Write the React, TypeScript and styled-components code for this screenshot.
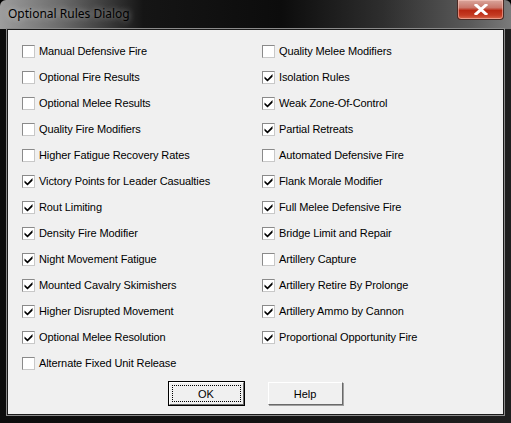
import styled, { createGlobalStyle } from 'styled-components'

const GlobalStyle = createGlobalStyle`
  html, body { margin: 0; padding: 0; background: #000; }
  body { width: 511px; height: 423px; overflow: hidden; }
`

const left = [
  { label: 'Manual Defensive Fire', checked: false },
  { label: 'Optional Fire Results', checked: false },
  { label: 'Optional Melee Results', checked: false },
  { label: 'Quality Fire Modifiers', checked: false },
  { label: 'Higher Fatigue Recovery Rates', checked: false },
  { label: 'Victory Points for Leader Casualties', checked: true },
  { label: 'Rout Limiting', checked: true },
  { label: 'Density Fire Modifier', checked: true },
  { label: 'Night Movement Fatigue', checked: true },
  { label: 'Mounted Cavalry Skimishers', checked: true },
  { label: 'Higher Disrupted Movement', checked: true },
  { label: 'Optional Melee Resolution', checked: true },
  { label: 'Alternate Fixed Unit Release', checked: false },
]

const right = [
  { label: 'Quality Melee Modifiers', checked: false },
  { label: 'Isolation Rules', checked: true },
  { label: 'Weak Zone-Of-Control', checked: true },
  { label: 'Partial Retreats', checked: true },
  { label: 'Automated Defensive Fire', checked: false },
  { label: 'Flank Morale Modifier', checked: true },
  { label: 'Full Melee Defensive Fire', checked: true },
  { label: 'Bridge Limit and Repair', checked: true },
  { label: 'Artillery Capture', checked: false },
  { label: 'Artillery Retire By Prolonge', checked: true },
  { label: 'Artillery Ammo by Cannon', checked: true },
  { label: 'Proportional Opportunity Fire', checked: true },
]

const CheckRow = ({ label, checked }: { label: string; checked: boolean }) => (
  <Row>
    <Box>
      {checked && (
        <svg width="9" height="9" viewBox="0 0 9 9">
          <path d="M0.5 3.5 L3.5 6.2 L8.5 1 L8.5 3.8 L3.5 8.6 L0.5 5.8 Z" fill="#000" />
        </svg>
      )}
    </Box>
    <Label>{label}</Label>
  </Row>
)

const App = () => {
  return (
    <Window>
      <GlobalStyle />
      <TitleBar>
        <Title>Optional Rules Dialog</Title>
        <CloseButton>
          <svg width="14" height="11" viewBox="0 0 14 11">
            <path d="M2 1 L12 10 M12 1 L2 10" stroke="#fff" strokeWidth="3" strokeLinecap="square" />
          </svg>
        </CloseButton>
      </TitleBar>
      <Frame>
        <Client>
          <Columns>
            <Column>
              {left.map((o) => (
                <CheckRow key={o.label} {...o} />
              ))}
            </Column>
            <Column>
              {right.map((o) => (
                <CheckRow key={o.label} {...o} />
              ))}
            </Column>
          </Columns>
          <Buttons>
            <Button $default>
              <Focus>OK</Focus>
            </Button>
            <Button>Help</Button>
          </Buttons>
        </Client>
      </Frame>
    </Window>
  )
}

export default App

const Window = styled.div`
  width: 511px;
  height: 423px;
  display: flex;
  flex-direction: column;
  box-sizing: border-box;
  border-radius: 6px 6px 0 0;
  background: linear-gradient(90deg, #9d9d9d 0%, #6b6b6b 12%, #151515 28%, #0c0c0c 55%, #2e2e2e 75%, #5a5a5a 92%, #7a7a7a 100%);
  overflow: hidden;
`

const TitleBar = styled.div`
  height: 29px;
  display: flex;
  justify-content: space-between;
  align-items: flex-start;
  padding: 0 7px 0 8px;
  flex-shrink: 0;
`

const Title = styled.div`
  font-family: 'Noto Sans', sans-serif;
  font-size: 12px;
  color: #000;
  margin-top: 5px;
  text-shadow: 0 0 6px rgba(255, 255, 255, 0.6);
`

const CloseButton = styled.div`
  width: 45px;
  height: 19px;
  display: flex;
  align-items: center;
  justify-content: center;
  border: 1px solid #4a2a24;
  border-top: none;
  border-radius: 0 0 4px 4px;
  background: linear-gradient(180deg, #d9a69c 0%, #c9776a 40%, #b92812 55%, #c43a22 80%, #d7684c 100%);
  box-shadow: inset 0 0 0 1px rgba(255, 210, 200, 0.5);
`

const Frame = styled.div`
  flex: 1;
  display: flex;
  padding: 0 7px 8px 7px;
  background: linear-gradient(90deg, #0c0c0c 0%, #121212 50%, #1f1f1f 100%);
`

const Client = styled.div`
  flex: 1;
  display: flex;
  flex-direction: column;
  background: #f0f0f0;
  border: 1px solid #1a1a1a;
  box-shadow: 0 0 0 1px #8a8a8a;
  padding: 8px 0 0 14px;
`

const Columns = styled.div`
  display: grid;
  grid-template-columns: 240px 1fr;
`

const Column = styled.div`
  display: flex;
  flex-direction: column;
`

const Row = styled.div`
  height: 26px;
  display: flex;
  align-items: center;
  gap: 4px;
`

const Box = styled.div`
  width: 13px;
  height: 13px;
  box-sizing: border-box;
  background: #fff;
  border: 1px solid;
  border-color: #8a8a8a #c8c8c8 #c8c8c8 #8a8a8a;
  display: flex;
  align-items: center;
  justify-content: center;
`

const Label = styled.span`
  font-family: 'Liberation Sans', Arial, sans-serif;
  font-size: 11px;
  color: #000;
  letter-spacing: -0.1px;
`

const Buttons = styled.div`
  display: flex;
  justify-content: center;
  gap: 24px;
  margin-top: 6px;
  margin-left: -14px;
`

const Button = styled.div<{ $default?: boolean }>`
  width: 75px;
  height: 23px;
  box-sizing: border-box;
  display: flex;
  align-items: center;
  justify-content: center;
  font-family: 'Liberation Sans', Arial, sans-serif;
  font-size: 11px;
  color: #000;
  background: #f0f0f0;
  border: 1px solid;
  border-color: #fff #696969 #696969 #fff;
  box-shadow: ${(p) => (p.$default ? '0 0 0 1px #000' : '1px 1px 0 #a0a0a0')};
  padding: 2px;
`

const Focus = styled.div`
  flex: 1;
  align-self: stretch;
  display: flex;
  align-items: center;
  justify-content: center;
  border: 1px dotted #000;
`
